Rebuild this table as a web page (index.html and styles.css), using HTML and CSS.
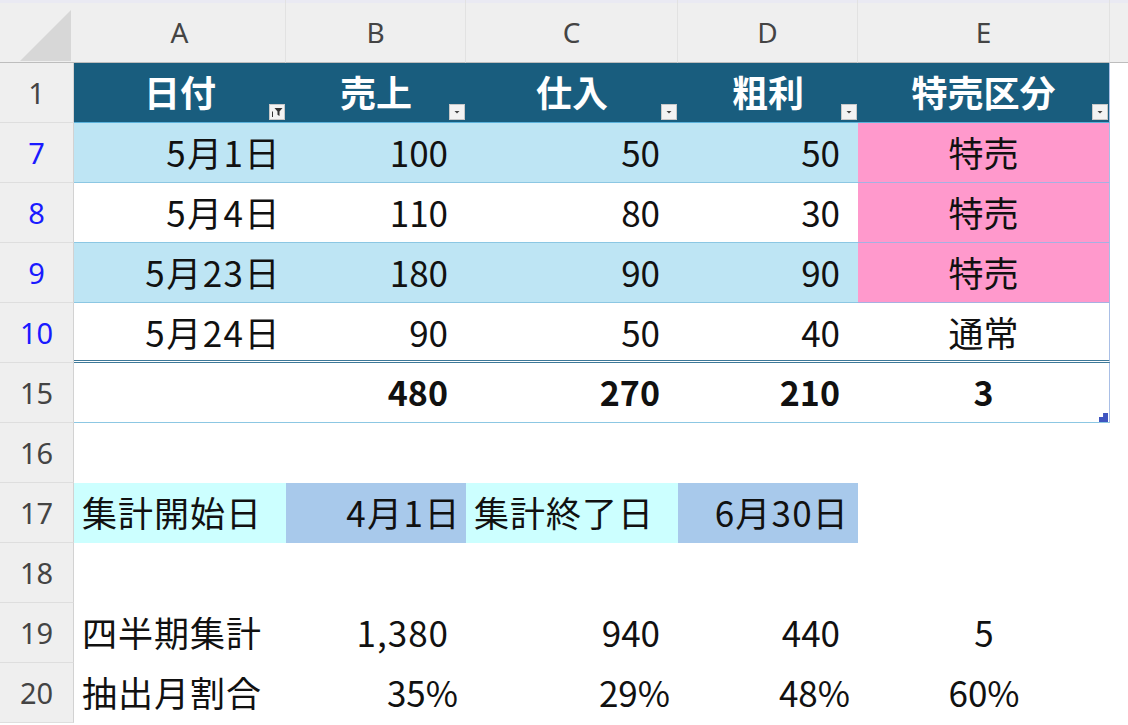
FILE: index.html
```html
<!DOCTYPE html>
<html lang="ja">
<head>
<meta charset="utf-8">
<title>Sheet</title>
<link rel="stylesheet" href="styles.css">
</head>
<body>
<div class="sheet">
  <div class="corner"><svg width="74" height="63" viewBox="0 0 74 63"><polygon points="20,61 71,10 71,61" fill="#d7d7d7"/></svg></div>
  <div class="ch">A</div>
  <div class="ch">B</div>
  <div class="ch">C</div>
  <div class="ch">D</div>
  <div class="ch">E</div>
  <div class="ch fill"></div>

  <div class="rh">1</div>
  <div class="th">日付<span class="fb"><svg width="14" height="14" viewBox="0 0 14 14"><path d="M4.5 3h8l-3 3.4v4.6l-2-1.2V6.4z" fill="#333"/><path d="M2.5 6.5v5.5" stroke="#333" stroke-width="1"/></svg></span></div>
  <div class="th">売上<span class="fb"><svg width="14" height="14" viewBox="0 0 14 14"><path d="M4.5 6h5l-2.5 2.5z" fill="#444"/></svg></span></div>
  <div class="th">仕入<span class="fb"><svg width="14" height="14" viewBox="0 0 14 14"><path d="M4.5 6h5l-2.5 2.5z" fill="#444"/></svg></span></div>
  <div class="th">粗利<span class="fb"><svg width="14" height="14" viewBox="0 0 14 14"><path d="M4.5 6h5l-2.5 2.5z" fill="#444"/></svg></span></div>
  <div class="th last">特売区分<span class="fb"><svg width="14" height="14" viewBox="0 0 14 14"><path d="M4.5 6h5l-2.5 2.5z" fill="#444"/></svg></span></div>
  <div class="c"></div>

  <div class="rh blue">7</div>
  <div class="c t band rd">5月1日</div>
  <div class="c t band rn">100</div>
  <div class="c t band rn">50</div>
  <div class="c t band rn">50</div>
  <div class="c t pink ctr last">特売</div>
  <div class="c"></div>

  <div class="rh blue">8</div>
  <div class="c t rd">5月4日</div>
  <div class="c t rn">110</div>
  <div class="c t rn">80</div>
  <div class="c t rn">30</div>
  <div class="c t pink ctr last">特売</div>
  <div class="c"></div>

  <div class="rh blue">9</div>
  <div class="c t band rd">5月23日</div>
  <div class="c t band rn">180</div>
  <div class="c t band rn">90</div>
  <div class="c t band rn">90</div>
  <div class="c t pink ctr last">特売</div>
  <div class="c"></div>

  <div class="rh blue">10</div>
  <div class="c t dbl rd">5月24日</div>
  <div class="c t dbl rn">90</div>
  <div class="c t dbl rn">50</div>
  <div class="c t dbl rn">40</div>
  <div class="c t dbl ctr last">通常</div>
  <div class="c"></div>

  <div class="rh">15</div>
  <div class="c tot"></div>
  <div class="c tot rn b">480</div>
  <div class="c tot rn b">270</div>
  <div class="c tot rn b">210</div>
  <div class="c tot ctr b last">3<span class="handle"></span></div>
  <div class="c"></div>

  <div class="rh">16</div>
  <div class="c"></div><div class="c"></div><div class="c"></div><div class="c"></div><div class="c"></div><div class="c"></div>

  <div class="rh">17</div>
  <div class="c cyan lft">集計開始日</div>
  <div class="c sky rd">4月1日</div>
  <div class="c cyan lft">集計終了日</div>
  <div class="c sky rd2">6月30日</div>
  <div class="c"></div>
  <div class="c"></div>

  <div class="rh">18</div>
  <div class="c"></div><div class="c"></div><div class="c"></div><div class="c"></div><div class="c"></div><div class="c"></div>

  <div class="rh">19</div>
  <div class="c lft">四半期集計</div>
  <div class="c rn wide">1,380</div>
  <div class="c rn">940</div>
  <div class="c rn">440</div>
  <div class="c ctr">5</div>
  <div class="c"></div>

  <div class="rh">20</div>
  <div class="c lft">抽出月割合</div>
  <div class="c rp">35%</div>
  <div class="c rp">29%</div>
  <div class="c rp">48%</div>
  <div class="c ctr">60%</div>
  <div class="c"></div>
</div>
</body>
</html>
```
FILE: styles.css
```css
html, body {
  margin: 0;
  padding: 0;
  background: #ffffff;
}

body {
  font-family: "Noto Sans CJK JP", "Noto Sans", sans-serif;
  color: #111;
  overflow: hidden;
}

.sheet {
  display: grid;
  grid-template-columns: 74px 212px 180px 212px 180px 252px 1fr;
  grid-template-rows: 63px repeat(11, 60px);
  width: 1128px;
  height: 725px;
}

.corner {
  background: #efefef;
  border-bottom: 1px solid #bdbdbd;
  box-sizing: border-box;
  box-shadow: inset 0 3px 0 #eaeaf3;
}

.corner svg {
  display: block;
}

.ch {
  background: #efefef;
  box-shadow: inset 0 3px 0 #eaeaf3;
  border-bottom: 1px solid #bdbdbd;
  border-right: 1px solid #e2e2e2;
  box-sizing: border-box;
  display: flex;
  align-items: center;
  justify-content: center;
  font-family: "Noto Sans", sans-serif;
  font-size: 28px;
  color: #444;
  padding-top: 2px;
}

.ch.fill {
  border-right: none;
}

.rh {
  background: #efefef;
  border-right: 1px solid #d2d2d2;
  border-bottom: 1px solid #dedede;
  box-sizing: border-box;
  display: flex;
  align-items: center;
  justify-content: center;
  font-family: "Noto Sans", sans-serif;
  font-size: 29px;
  color: #444;
}

.rh.blue {
  color: #1a1aff;
}

.th {
  position: relative;
  background: #195d7e;
  color: #ffffff;
  font-weight: 700;
  font-size: 36px;
  display: flex;
  align-items: center;
  justify-content: center;
  border-bottom: 1px solid #5ab2dc;
  box-sizing: border-box;
  padding-bottom: 3px;
}

.fb {
  position: absolute;
  right: 1px;
  bottom: 2px;
  width: 16px;
  height: 16px;
  background: #f3f3f3;
  border: 1px solid #c8c8c8;
  box-sizing: border-box;
  display: flex;
  align-items: center;
  justify-content: center;
}

.fb svg {
  display: block;
}

.c {
  position: relative;
  box-sizing: border-box;
  display: flex;
  align-items: center;
  font-size: 35px;
  color: #111;
  white-space: nowrap;
  padding-bottom: 3px;
}

.t {
  border-bottom: 1px solid #8cc7e3;
}

.band {
  background: #bee5f4;
}

.pink {
  background: #ff99cc;
  border-bottom-color: #a7b0e2;
}

.last {
  border-right: 1px solid #a9bfe6;
}

.dbl {
  border-bottom: 3px double #3e7898;
  padding-bottom: 1px;
}

.tot {
  border-bottom: 1px solid #8cc7e3;
}

.b {
  font-weight: 700;
  font-size: 34px;
}

.rd {
  justify-content: flex-end;
  padding-right: 5px;
  letter-spacing: 1.5px;
}

.rd2 {
  justify-content: flex-end;
  padding-right: 9px;
  letter-spacing: 1.2px;
}

.rn {
  justify-content: flex-end;
  padding-right: 18px;
}

.wide {
  letter-spacing: 1px;
  padding-right: 17px;
}

.rp {
  justify-content: flex-end;
  padding-right: 8px;
}

.ctr {
  justify-content: center;
}

.lft {
  justify-content: flex-start;
  padding-left: 8px;
  letter-spacing: 1px;
}

.cyan {
  background: #ccffff;
}

.sky {
  background: #a8c9eb;
}

.handle {
  position: absolute;
  right: 1px;
  bottom: 0;
  width: 9px;
  height: 9px;
  background: #3f55c0;
  clip-path: polygon(100% 0, 100% 100%, 0 100%, 0 45%, 45% 45%, 45% 0);
}
```
